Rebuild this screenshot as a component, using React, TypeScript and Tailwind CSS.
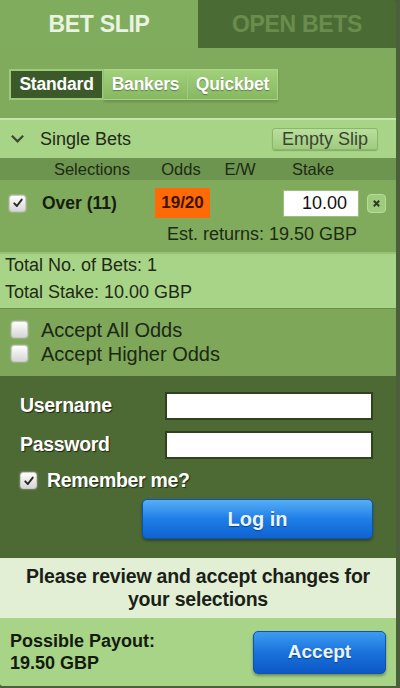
import React from "react";

const Check = () => (
  <svg viewBox="0 0 16 16" className="w-[12px] h-[12px]">
    <path d="M3 8.5 L6.5 12 L13 3.5" stroke="#2a2a2a" strokeWidth="2.6" fill="none" strokeLinecap="round" strokeLinejoin="round" />
  </svg>
);

function Box({ checked }: { checked?: boolean }) {
  return (
    <div className="w-[17px] h-[17px] rounded-[3px] border border-[#c9c9c9] bg-gradient-to-b from-[#ffffff] to-[#d6d6d6] flex items-center justify-center shadow-[0_0_2px_rgba(255,255,255,0.6)]">
      {checked ? <Check /> : null}
    </div>
  );
}

export default function App() {
  return (
    <div className="w-[400px] h-[688px] bg-[#4a5f3a] overflow-hidden" style={{ fontFamily: '"Liberation Sans", Arial, sans-serif' }}>
      <div className="w-[396px] h-[688px] flex flex-col">
        {/* Tabs */}
        <div className="flex h-[48px] shrink-0">
          <div className="w-[198px] bg-[#80ad5d] flex items-center justify-center text-[23px] font-bold text-[#eaf3e0] tracking-[-0.3px] pt-[1px]">BET SLIP</div>
          <div className="flex-1 bg-[#4b6b35] flex items-center justify-center text-[23px] font-bold text-[#6a8d4e] tracking-[-0.3px] rounded-tr-[4px] pt-[1px]">OPEN BETS</div>
        </div>
        {/* Bet type buttons */}
        <div className="h-[70px] shrink-0 bg-[#80aa5c] flex items-center px-[9px] pt-[2px]">
          <div className="flex h-[31px]">
            <div className="w-[95px] bg-[#3c5a29] border-2 border-[#9ccb78] flex items-center justify-center text-white font-bold text-[17.5px] tracking-[-0.2px]">Standard</div>
            <div className="w-[84px] bg-gradient-to-b from-[#a2d07c] to-[#86b861] border-y border-r border-[#a9d585] flex items-center justify-center text-white font-bold text-[17.5px] tracking-[-0.2px] [text-shadow:0_1px_1px_rgba(0,0,0,0.35)] shadow-[0_2px_2px_rgba(0,0,0,0.15)]">Bankers</div>
            <div className="w-[90px] bg-gradient-to-b from-[#a2d07c] to-[#86b861] border-y border-r border-[#a9d585] flex items-center justify-center text-white font-bold text-[17.5px] tracking-[-0.2px] [text-shadow:0_1px_1px_rgba(0,0,0,0.35)] shadow-[0_2px_2px_rgba(0,0,0,0.15)]">Quickbet</div>
          </div>
        </div>
        {/* Single bets */}
        <div className="h-[40px] shrink-0 bg-[#a8d487] border-t-2 border-[#c5e6ab] flex items-center pl-[10px] pr-[18px]">
          <svg viewBox="0 0 16 16" className="w-[15px] h-[15px] mr-[15px] mt-[-2px]">
            <path d="M2 5 L8 11 L14 5" stroke="#3d4a33" strokeWidth="2.4" fill="none" />
          </svg>
          <span className="text-[18px] text-[#1f2a17]">Single Bets</span>
          <div className="ml-auto h-[22px] w-[106px] rounded-[3px] bg-gradient-to-b from-[#b9df9d] to-[#9fcb7e] border border-[#8db66c] shadow-[0_1px_1px_rgba(0,0,0,0.2)] flex items-center justify-center text-[18px] text-[#3a4432]">Empty Slip</div>
        </div>
        {/* Header row */}
        <div className="h-[22px] shrink-0 bg-[#6e954f] flex items-center text-[16.5px] text-[#1d2a14]">
          <div className="w-[142px] text-center pl-[42px]">Selections</div>
          <div className="w-[78px] text-center">Odds</div>
          <div className="w-[40px] text-center">E/W</div>
          <div className="w-[90px] text-center pl-[16px]">Stake</div>
        </div>
        {/* Bet row */}
        <div className="h-[72px] shrink-0 bg-[#80aa5c] flex flex-col">
          <div className="flex items-center h-[44px] pt-[2px]">
            <div className="ml-[9px]"><Box checked /></div>
            <div className="ml-[16px] w-[113px] font-bold text-[17.5px] text-[#161d10]">Over (11)</div>
            <div className="w-[55px] h-[30px] bg-[#ff6a06] flex items-center justify-center font-bold text-[17px] text-[#3b1400]">19/20</div>
            <div className="ml-[73px] w-[76px] h-[27px] bg-white border border-[#9bbd80] flex items-center justify-end pr-[11px] text-[18px] text-[#111]">10.00</div>
            <div className="ml-[8px] w-[19px] h-[19px] rounded-[4px] bg-[#9fcb7e] border border-[#b6dc98] flex items-center justify-center">
              <svg viewBox="0 0 10 10" className="w-[9px] h-[9px]"><path d="M2 2 L8 8 M8 2 L2 8" stroke="#2e3a26" strokeWidth="2.2" /></svg>
            </div>
          </div>
          <div className="pl-[167px] text-[18px] text-[#1d2a14] leading-[20px]">Est. returns: 19.50 GBP</div>
        </div>
        {/* Totals */}
        <div className="h-[56px] shrink-0 bg-[#a8d487] border-t-2 border-[#97c276] flex flex-col justify-center pl-[5px] pb-[5px] gap-[7px] text-[18px] text-[#1f2a17] leading-[20px]">
          <div>Total No. of Bets: 1</div>
          <div>Total Stake: 10.00 GBP</div>
        </div>
        {/* Accept options */}
        <div className="h-[68px] shrink-0 bg-[#7ea75a] border-t border-[#6a9148] flex flex-col justify-center pl-[11px] gap-[4px] text-[20px] text-[#1c2814] leading-[20px] pb-[2px]">
          <div className="flex items-center"><Box /><span className="ml-[13px]">Accept All Odds</span></div>
          <div className="flex items-center"><Box /><span className="ml-[13px]">Accept Higher Odds</span></div>
        </div>
        {/* Login */}
        <div className="h-[182px] shrink-0 bg-[#4d6a35] pt-[16px] pl-[20px] pr-[23px] flex flex-col">
          <div className="flex items-center h-[28px]">
            <div className="w-[145px] font-bold text-[19.5px] tracking-[-0.3px] text-white [text-shadow:1px_1px_1px_#1d2a12]">Username</div>
            <div className="flex-1 h-[28px] bg-white border-2 border-[#2e4220]" />
          </div>
          <div className="flex items-center h-[28px] mt-[11px]">
            <div className="w-[145px] font-bold text-[19.5px] tracking-[-0.3px] text-white [text-shadow:1px_1px_1px_#1d2a12]">Password</div>
            <div className="flex-1 h-[28px] bg-white border-2 border-[#2e4220]" />
          </div>
          <div className="flex items-center mt-[7px]">
            <Box checked />
            <span className="ml-[10px] font-bold text-[19.5px] tracking-[-0.3px] text-white [text-shadow:1px_1px_1px_#1d2a12]">Remember me?</span>
          </div>
          <div className="ml-[122px] mt-[4px] h-[40px] rounded-[5px] bg-gradient-to-b from-[#55aef5] via-[#1f7ee6] to-[#0f62d2] border border-[#0d52b5] shadow-[0_2px_3px_rgba(0,0,0,0.35)] flex items-center justify-center font-bold text-[20px] text-[#eaf4ff] [text-shadow:0_1px_1px_rgba(0,0,0,0.4)]">Log in</div>
        </div>
        {/* Notice */}
        <div className="h-[60px] shrink-0 bg-[#e2efd5] flex flex-col items-center justify-center text-center font-bold text-[19.5px] tracking-[-0.2px] text-[#1b1f18] leading-[23px]">
          <div>Please review and accept changes for</div>
          <div>your selections</div>
        </div>
        {/* Footer */}
        <div className="flex-1 bg-[#a8d487] border-b-2 border-[#4a5f3a] flex items-center pl-[10px] pr-[10px] rounded-bl-[4px]">
          <div className="font-bold text-[18px] text-[#141a10] leading-[22px]">
            <div>Possible Payout:</div>
            <div>19.50 GBP</div>
          </div>
          <div className="ml-auto w-[133px] h-[43px] rounded-[5px] bg-gradient-to-b from-[#3d9cf0] via-[#1a72dd] to-[#0c58c6] border border-[#0d52b5] shadow-[0_2px_3px_rgba(0,0,0,0.35)] flex items-center justify-center font-bold text-[19px] text-[#eaf4ff] [text-shadow:0_1px_1px_rgba(0,0,0,0.4)]">Accept</div>
        </div>
      </div>
    </div>
  );
}
